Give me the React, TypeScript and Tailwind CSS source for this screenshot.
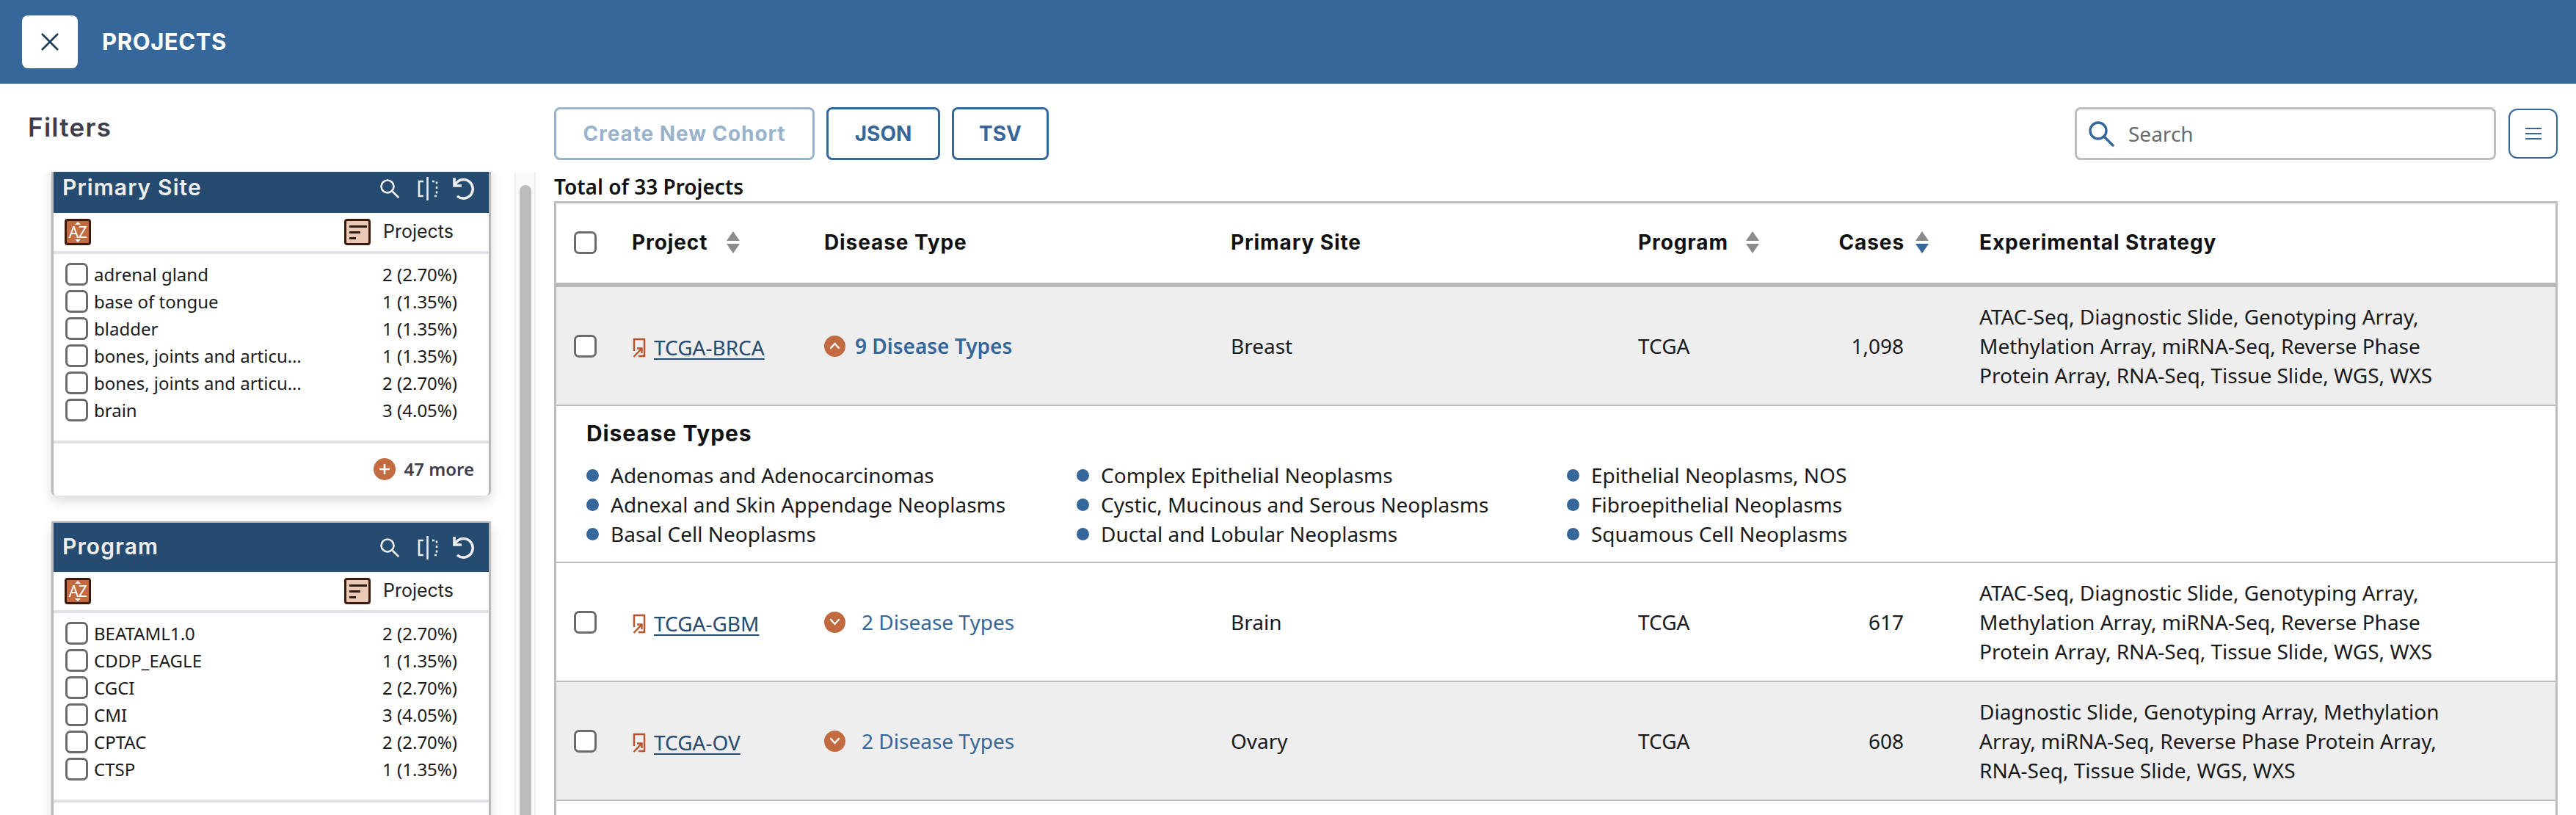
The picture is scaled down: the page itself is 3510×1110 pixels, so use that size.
import React from "react";

const noto = "font-['Noto_Sans',sans-serif]";
const mont = "font-['Inter',sans-serif]";

const siteRows = [
  ["adrenal gland", "2 (2.70%)"],
  ["base of tongue", "1 (1.35%)"],
  ["bladder", "1 (1.35%)"],
  ["bones, joints and articu…", "1 (1.35%)"],
  ["bones, joints and articu…", "2 (2.70%)"],
  ["brain", "3 (4.05%)"],
];

const programRows = [
  ["BEATAML1.0", "2 (2.70%)"],
  ["CDDP_EAGLE", "1 (1.35%)"],
  ["CGCI", "2 (2.70%)"],
  ["CMI", "3 (4.05%)"],
  ["CPTAC", "2 (2.70%)"],
  ["CTSP", "1 (1.35%)"],
];

const diseaseTypes = [
  ["Adenomas and Adenocarcinomas", "Adnexal and Skin Appendage Neoplasms", "Basal Cell Neoplasms"],
  ["Complex Epithelial Neoplasms", "Cystic, Mucinous and Serous Neoplasms", "Ductal and Lobular Neoplasms"],
  ["Epithelial Neoplasms, NOS", "Fibroepithelial Neoplasms", "Squamous Cell Neoplasms"],
];

const tableCols = "grid grid-cols-[103px_262px_554px_555px_260px_205px_1fr] items-center";

function Checkbox() {
  return <div className="w-[31px] h-[31px] shrink-0 rounded-[7px] border-[3px] border-[#6b6b6b] bg-white" />;
}

function SortArrows({ active }: { active?: boolean }) {
  return (
    <svg width="18" height="30" viewBox="0 0 18 30" className="shrink-0">
      <path d="M9 0 L18 13 L0 13 Z" fill="#8c8c8c" />
      <path d="M9 30 L18 17 L0 17 Z" fill={active ? "#35679a" : "#8c8c8c"} />
    </svg>
  );
}

function LinkIcon() {
  return (
    <svg width="18" height="27" viewBox="0 0 18 27" fill="none" stroke="#b9512a" strokeWidth="2.4" className="shrink-0">
      <path d="M2 18 V2 H16 V25 H8" />
      <path d="M1.5 26 L12 15" />
      <path d="M6 14.5 H12.5 V21" />
    </svg>
  );
}

function ChevronCircle({ up }: { up?: boolean }) {
  return (
    <div className="w-[29px] h-[29px] rounded-full bg-[#c26b41] flex items-center justify-center shrink-0">
      <svg width="15" height="10" viewBox="0 0 15 10" fill="none" stroke="white" strokeWidth="2.4" strokeLinecap="round" strokeLinejoin="round">
        <path d={up ? "M2 8 L7.5 2 L13 8" : "M2 2 L7.5 8 L13 2"} />
      </svg>
    </div>
  );
}

function FacetPanel({ title, rows, clipped, children }: { title: string; rows: string[][]; clipped?: boolean; children?: React.ReactNode }) {
  return (
    <div className={`w-[599px] bg-white border-x-[3px] border-[#b9b9b9] rounded-b-[6px] shadow-[0_8px_16px_rgba(0,0,0,0.14)] ${clipped ? "-mt-[11px]" : "border-t-[3px]"}`}>
      <div className={`h-[67px] bg-[#264b70] flex items-center justify-between pl-[12px] pr-[19px] ${clipped ? "" : "-mt-[1px]"}`}>
        <span className={`${mont} text-[30px] font-semibold text-[#eeeeee] tracking-[1.1px] -mt-[2px]`}>{title}</span>
        <div className="flex items-center">
          <svg width="27" height="27" viewBox="0 0 27 27" fill="none" stroke="#eeeeee" strokeWidth="2.6" strokeLinecap="round">
            <circle cx="11" cy="11" r="8.5" />
            <path d="M17 17 L25.5 25.5" />
          </svg>
          <svg width="28" height="32" viewBox="0 0 28 32" fill="none" stroke="#eeeeee" strokeWidth="2.6" className="ml-[25px]">
            <path d="M8 6 H2 V26 H8" />
            <path d="M13.5 0 V32" />
            <path d="M20 6 H26 V26 H20" strokeDasharray="3 3.5" />
          </svg>
          <svg width="31" height="32" viewBox="0 0 31 32" fill="none" stroke="#eeeeee" strokeWidth="3.6" className="ml-[19px]">
            <path d="M3 1 V12 H13" />
            <path d="M3.5 11.5 C6 7 10 3.5 15.5 3.5 A 12.8 12.8 0 1 1 7 26" />
          </svg>
        </div>
      </div>
      <div className="h-[52px] flex items-center pl-[15px] pr-[48px] border-b-[4px] border-[#e0e1e8] box-content">
        <div className="relative w-[36px] h-[36px] rounded-[4px] border-[3px] border-[#3d1a0e] bg-[#c26b41] flex items-center justify-center">
          <span className={`${noto} text-[21px] leading-none text-white tracking-[-0.5px]`}>AZ</span>
          <svg width="8" height="28" viewBox="0 0 8 28" fill="white" className="absolute left-[11px] top-[1px]">
            <path d="M4 0 L8 4 L0 4 Z" />
            <path d="M4 28 L8 24 L0 24 Z" />
          </svg>
        </div>
        <div className="ml-auto w-[36px] h-[36px] rounded-[4px] border-[3px] border-[#3d1a0e] bg-[#eac8b4] flex flex-col gap-[5px] justify-center pl-[4px]">
          <div className="w-[24px] h-[3px] bg-[#2a1a14]" />
          <div className="w-[15px] h-[3px] bg-[#2a1a14]" />
          <div className="w-[9px] h-[3px] bg-[#2a1a14]" />
        </div>
        <span className={`${mont} ml-[17px] text-[25px] text-[#222222]`}>Projects</span>
      </div>
      <div className="pt-[9px] pb-[23px] pl-[16px] pr-[43px]">
        {rows.map((r, i) => (
          <div key={i} className="h-[37px] flex items-center">
            <Checkbox />
            <span className={`${noto} ml-[8px] text-[24px] text-[#1a1a1a] whitespace-nowrap`}>{r[0]}</span>
            <span className={`${noto} ml-auto text-[24px] text-[#1a1a1a] whitespace-nowrap`}>{r[1]}</span>
          </div>
        ))}
      </div>
      {children}
    </div>
  );
}

function ProjectRow({ name, count, expanded, site, cases, strategy, gray }: { name: string; count: number; expanded?: boolean; site: string; cases: string; strategy: string; gray?: boolean }) {
  return (
    <div className={`${tableCols} h-[160px] border-b-[2px] box-content border-[#bdbdbd] ${gray ? "bg-[#eeeeee]" : "bg-white"} ${noto} text-[28px] text-[#1a1a1a]`}>
      <div className="pl-[24px]">
        <Checkbox />
      </div>
      <div className="flex items-center gap-[11px] pl-[1px] pt-[4px]">
        <LinkIcon />
        <span className="underline underline-offset-[4px] decoration-2 text-[#264b70]">{name}</span>
      </div>
      <div className="flex items-center">
        <ChevronCircle up={expanded} />
        <span className={`text-[#35679a] whitespace-nowrap ${expanded ? "ml-[13px] font-semibold" : "ml-[22px]"}`}>
          {count} Disease Types
        </span>
      </div>
      <div>{site}</div>
      <div>TCGA</div>
      <div className="text-right pr-[103px]">{cases}</div>
      <div className="leading-[40px] max-w-[640px]">{strategy}</div>
    </div>
  );
}

export default function App() {
  return (
    <div className="w-[3510px] h-[1110px] overflow-hidden bg-white flex flex-col">
      <div className="h-[114px] shrink-0 bg-[#35679a] flex items-center pl-[30px]">
        <div className="w-[76px] h-[72px] rounded-[8px] bg-white flex items-center justify-center">
          <svg width="24" height="24" viewBox="0 0 24 24" fill="none" stroke="#1c3a52" strokeWidth="2.6">
            <path d="M1 1 L23 23 M23 1 L1 23" />
          </svg>
        </div>
        <span className={`${mont} ml-[33px] text-[31px] font-bold tracking-[0.6px] text-white`}>PROJECTS</span>
      </div>

      <div className="flex-1 min-h-0 flex">
        <div className="w-[755px] shrink-0 flex flex-col min-h-0">
          <div className="h-[120px] shrink-0 pl-[38px] pt-[30px]">
            <span className={`${mont} text-[35px] leading-[58px] font-semibold tracking-[1.3px] text-[#3d3d4d]`}>Filters</span>
          </div>
          <div className="flex-1 min-h-0 flex overflow-hidden">
            <div className="pl-[70px] w-[701px] shrink-0 flex flex-col gap-[35px]">
              <FacetPanel title="Primary Site" rows={siteRows} clipped>
                <div className="h-[75px] pb-[2px] border-t-[4px] border-[#e0e1e8] flex items-center justify-end pr-[20px] gap-[11px]">
                  <div className="w-[30px] h-[30px] rounded-full bg-[#c26b41] flex items-center justify-center">
                    <svg width="16" height="16" viewBox="0 0 16 16" stroke="white" strokeWidth="2.6">
                      <path d="M8 1 V15 M1 8 H15" />
                    </svg>
                  </div>
                  <span className={`${noto} text-[24px] font-semibold text-[#3d3d4d]`}>47 more</span>
                </div>
              </FacetPanel>
              <FacetPanel title="Program" rows={programRows}>
                <div className="h-[72px] border-t-[4px] border-[#e0e1e8]" />
              </FacetPanel>
            </div>
            <div className="w-[29px] shrink-0 bg-[#fafafa] border-x-[2px] border-[#eeeeee] pt-[18px] flex justify-center">
              <div className="w-[16px] h-[1000px] rounded-t-full bg-[#bdbdbd]" />
            </div>
          </div>
        </div>

        <div className="w-[730px] flex-1 min-w-0 pr-[25px]">
          <div className="h-[120px] pt-[32px] flex items-start">
            <div className={`${mont} w-[355px] h-[72px] rounded-[8px] border-[3px] border-[#9ab3cc] flex items-center justify-center text-[28px] font-bold tracking-[0.9px] text-[#9ab3cc]`}>
              Create New Cohort
            </div>
            <div className={`${mont} ml-[16px] w-[155px] h-[72px] rounded-[8px] border-[3px] border-[#35679a] flex items-center justify-center text-[28px] font-bold text-[#35679a]`}>
              JSON
            </div>
            <div className={`${mont} ml-[16px] w-[132px] h-[72px] rounded-[8px] border-[3px] border-[#35679a] flex items-center justify-center text-[28px] font-bold text-[#35679a]`}>
              TSV
            </div>
            <div className="ml-auto w-[574px] h-[72px] rounded-[8px] border-[3px] border-[#bdbdbd] flex items-center pl-[15px]">
              <svg width="36" height="36" viewBox="0 0 36 36" fill="none" stroke="#35679a" strokeWidth="3.4" strokeLinecap="round">
                <circle cx="14" cy="14" r="11" />
                <path d="M22 22 L34 34" />
              </svg>
              <span className={`${noto} ml-[19px] text-[28px] text-[#6b6b6b]`}>Search</span>
            </div>
            <div className="ml-[17px] mt-[2px] w-[67px] h-[68px] rounded-[12px] border-[2px] border-[#35679a] flex flex-col items-center justify-center gap-[5px]">
              <div className="w-[22px] h-[2px] bg-[#35679a]" />
              <div className="w-[22px] h-[2px] bg-[#35679a]" />
              <div className="w-[22px] h-[2px] bg-[#35679a]" />
            </div>
          </div>

          <div className={`${noto} h-[40px] text-[28px] leading-[40px] font-semibold text-[#111111]`}>Total of 33 Projects</div>

          <div className="border-x-[3px] border-t-[3px] border-[#bdbdbd]">
            <div className={`${tableCols} h-[106px] pb-[2px] border-b-[8px] box-content border-[#b9b9b9] ${mont} text-[28px] font-bold tracking-[0.9px] text-[#111111] -mb-[2px]`}>
              <div className="pl-[24px]">
                <Checkbox />
              </div>
              <div className="flex items-center gap-[26px]">
                <span>Project</span>
                <SortArrows />
              </div>
              <div>Disease Type</div>
              <div>Primary Site</div>
              <div className="flex items-center gap-[24px]">
                <span>Program</span>
                <SortArrows />
              </div>
              <div className="flex items-center justify-end gap-[15px] pr-[69px]">
                <span>Cases</span>
                <SortArrows active />
              </div>
              <div>Experimental Strategy</div>
            </div>

            <ProjectRow
              gray
              expanded
              name="TCGA-BRCA"
              count={9}
              site="Breast"
              cases="1,098"
              strategy="ATAC-Seq, Diagnostic Slide, Genotyping Array, Methylation Array, miRNA-Seq, Reverse Phase Protein Array, RNA-Seq, Tissue Slide, WGS, WXS"
            />

            <div className="h-[212px] border-b-[2px] box-content border-[#bdbdbd] pl-[41px]">
              <div className={`${mont} h-[74px] flex items-center text-[30px] font-bold tracking-[0.9px] text-[#111111]`}>Disease Types</div>
              <div className="flex">
                {diseaseTypes.map((col, i) => (
                  <div key={i} className="w-[668px]">
                    {col.map((d) => (
                      <div key={d} className={`${noto} h-[40px] flex items-center text-[28px] text-[#1a1a1a]`}>
                        <div className="w-[17px] h-[17px] rounded-full bg-[#35679a] mr-[16px]" />
                        {d}
                      </div>
                    ))}
                  </div>
                ))}
              </div>
            </div>

            <ProjectRow
              name="TCGA-GBM"
              count={2}
              site="Brain"
              cases="617"
              strategy="ATAC-Seq, Diagnostic Slide, Genotyping Array, Methylation Array, miRNA-Seq, Reverse Phase Protein Array, RNA-Seq, Tissue Slide, WGS, WXS"
            />
            <ProjectRow
              gray
              name="TCGA-OV"
              count={2}
              site="Ovary"
              cases="608"
              strategy="Diagnostic Slide, Genotyping Array, Methylation Array, miRNA-Seq, Reverse Phase Protein Array, RNA-Seq, Tissue Slide, WGS, WXS"
            />
            <div className="h-[161px] bg-white" />
          </div>
        </div>
      </div>
    </div>
  );
}
